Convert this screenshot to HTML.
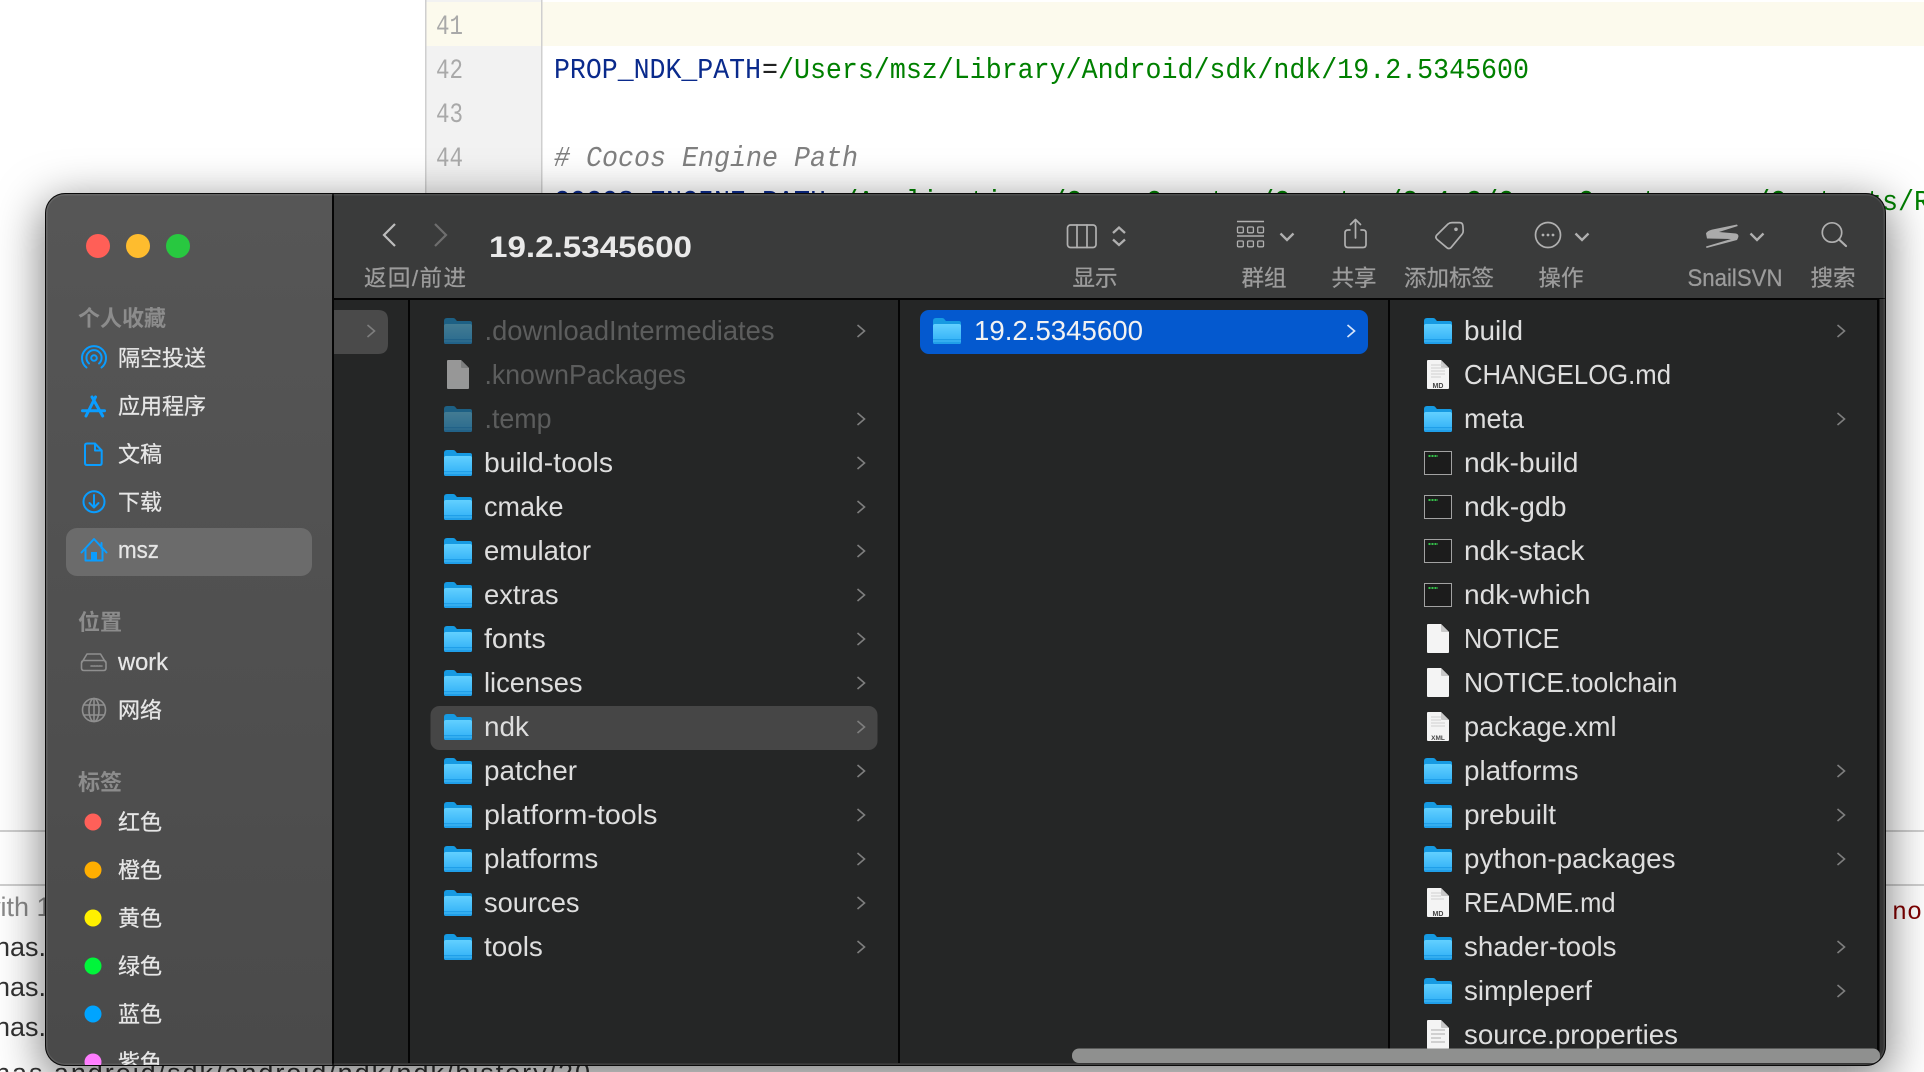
<!DOCTYPE html>
<html lang="zh"><head><meta charset="utf-8"><title>Finder</title>
<style>
html,body{margin:0;padding:0;width:1924px;height:1072px;overflow:hidden;background:#fff}
svg{display:block;position:absolute}
#bg{left:0;top:0}
#win{position:absolute;left:45px;top:193px;width:1841px;height:873px;border-radius:20px;overflow:hidden;box-shadow:0 12px 45px 3px rgba(0,0,0,.5);background:#252626}
#win svg{left:0;top:0}
#edge{position:absolute;left:0;top:0;right:0;bottom:0;border-radius:20px;box-shadow:inset 0 0 0 1px #0a0a0a,inset 0 0 0 2.500px rgba(255,255,255,.09);pointer-events:none}
text{font-family:"Liberation Sans","Noto Sans CJK SC",sans-serif}
.m{font-family:"Liberation Mono",monospace;font-size:29px}
.n{font-family:"Liberation Mono",monospace;font-size:28px;fill:#a9a9a9}
.t{font-size:27.500px;fill:#dedede}
.d{font-size:27.500px;fill:#5c5d5d}
.l{font-size:22.500px;fill:#9c9c9c;text-anchor:middle;stroke:#9c9c9c;stroke-width:.25px}
.s{font-size:22px;fill:#e6e6e6;stroke:#e6e6e6;stroke-width:.25px}
.h{font-size:22px;fill:#8c8c8c;font-weight:700}
.b{font-size:27px;fill:#333}
.ic{fill:none;stroke:#b0b0b0;stroke-width:1.700;stroke-linecap:round;stroke-linejoin:round}
.bl{fill:none;stroke:#0a9dff;stroke-width:2;stroke-linecap:round;stroke-linejoin:round}
.gr{fill:none;stroke:#8f8f8f;stroke-width:1.600;stroke-linecap:round;stroke-linejoin:round}
</style></head><body>
<svg id="bg" width="1924" height="1072" viewBox="0 0 1924 1072">
<rect x="425" y="0" width="117" height="900" fill="#f2f2f2"/>
<rect x="425" y="2" width="1499" height="44" fill="#fcfaed"/>
<rect x="425" y="0" width="1.500" height="900" fill="#cfcfcf"/>
<rect x="541" y="0" width="1.500" height="900" fill="#cfcfcf"/>
<text class="n" x="436" y="34" textLength="27" lengthAdjust="spacingAndGlyphs">41</text>
<text class="n" x="436" y="78" textLength="27" lengthAdjust="spacingAndGlyphs">42</text>
<text class="n" x="436" y="122" textLength="27" lengthAdjust="spacingAndGlyphs">43</text>
<text class="n" x="436" y="166" textLength="27" lengthAdjust="spacingAndGlyphs">44</text>
<text class="m" x="554" y="78" fill="#0a2a8c" textLength="207" lengthAdjust="spacingAndGlyphs">PROP_NDK_PATH</text>
<text class="m" x="762" y="78" fill="#222" textLength="16" lengthAdjust="spacingAndGlyphs">=</text>
<text class="m" x="778" y="78" fill="#008000" textLength="751" lengthAdjust="spacingAndGlyphs">/Users/msz/Library/Android/sdk/ndk/19.2.5345600</text>
<text class="m" x="554" y="166" fill="#808080" font-style="italic" textLength="304" lengthAdjust="spacingAndGlyphs"># Cocos Engine Path</text>
<text class="m" x="554" y="210" fill="#0a2a8c" textLength="272" lengthAdjust="spacingAndGlyphs">COCOS_ENGINE_PATH</text>
<text class="m" x="826" y="210" fill="#222" textLength="16" lengthAdjust="spacingAndGlyphs">=</text>
<text class="m" x="842" y="210" fill="#008000" textLength="1216" lengthAdjust="spacingAndGlyphs">/Applications/CocosCreator/Creator/2.4.3/CocosCreator.app/Contents/Resources</text>
<rect x="0" y="830" width="1924" height="2" fill="#cfcfcf"/>
<rect x="0" y="884" width="1924" height="2" fill="#cfcfcf"/>
<text class="b" x="-19" y="916" style="fill:#8a8a8a">with 1</text>
<text class="b" x="-5" y="956">has.</text>
<text class="b" x="-5" y="996">has.</text>
<text class="b" x="-5" y="1036">has.</text>
<text class="b" x="-5" y="1082" textLength="595">has android/sdk/android/ndk/ndk/history/20</text>
<text class="m" x="1892" y="919" style="fill:#800000;font-size:25px" textLength="30" lengthAdjust="spacingAndGlyphs">no</text>
</svg>

<div id="win">
<svg width="1841" height="873" viewBox="45 193 1841 873">
<defs>
<linearGradient id="gf" x1="0" y1="0" x2="0" y2="1"><stop offset="0" stop-color="#62d0ff"/><stop offset="1" stop-color="#2daef6"/></linearGradient>
<linearGradient id="side" x1="0" y1="0" x2="0" y2="1"><stop offset="0" stop-color="#565656"/><stop offset="1" stop-color="#4a4a4a"/></linearGradient>
<symbol id="f" width="28" height="27" viewBox="0 0 28 27" overflow="visible">
<path d="M0 3Q0 0 3 0H9Q11 0 12 2L13 3H26Q28 3 28 5V24Q28 26 26 26H2Q0 26 0 24Z" fill="#169ae2"/>
<path d="M0 8Q0 6 2 6H26Q28 6 28 8V24Q28 26 26 26H2Q0 26 0 24Z" fill="url(#gf)"/>
<path d="M0 21H28V24Q28 26 26 26H2Q0 26 0 24Z" fill="#209fe9"/>
<rect x="0" y="22.500" width="28" height="1" fill="#48bdf7"/>
</symbol>
<symbol id="p" width="22" height="29" viewBox="0 0 22 29" overflow="visible">
<path d="M1 0H14L22 8V28Q22 29 21 29H1Q0 29 0 28V1Q0 0 1 0Z" fill="#f4f4f4"/>
<path d="M14 0L22 8H15Q14 8 14 7Z" fill="#c8c8c8"/>
</symbol>
<symbol id="x" width="28" height="24" viewBox="0 0 28 24" overflow="visible">
<rect x=".5" y=".5" width="27" height="23" fill="#1c1c1c" stroke="#a2a2a2"/>
<path d="M4.500 5H14" stroke="#35c24a" stroke-width="2" stroke-dasharray="2 1"/>
</symbol>
<symbol id="c" width="10" height="14" viewBox="0 0 10 14"><path d="M1.500 1L8.500 7L1.500 13" fill="none" stroke="#7e7e7e" stroke-width="1.600"/></symbol>
<symbol id="v" width="16" height="10" viewBox="0 0 16 10"><path d="M1.500 1.500L8 8L14.500 1.500" fill="none" stroke="#b0b0b0" stroke-width="2.300"/></symbol>
</defs>

<!-- panes -->
<rect x="45" y="193" width="288" height="873" fill="url(#side)"/>
<rect x="332" y="193" width="1554" height="105" fill="#3a3b3b"/>
<rect x="332" y="299" width="1545" height="767" fill="#252626"/>
<rect x="332" y="298" width="1554" height="2" fill="#050505"/>
<rect x="332" y="193" width="2" height="873" fill="#050505"/>
<rect x="408" y="299" width="2" height="767" fill="#050505"/>
<rect x="898" y="299" width="2" height="767" fill="#050505"/>
<rect x="1388" y="299" width="2" height="767" fill="#050505"/>
<rect x="1877" y="299" width="2.500" height="767" fill="#050505"/>
<rect x="1879.500" y="299" width="6.500" height="767" fill="#333"/>
<rect x="334" y="1063" width="1552" height="3" fill="#2c2c2c"/>

<!-- traffic lights -->
<circle cx="98" cy="246" r="12" fill="#ff5f57"/>
<circle cx="138" cy="246" r="12" fill="#febc2e"/>
<circle cx="178" cy="246" r="12" fill="#28c840"/>

<!-- sidebar -->
<text class="h" x="78" y="326" textLength="88">个人收藏</text>
<rect x="66" y="528" width="246" height="48" rx="11" fill="#6b6b6b"/>
<g class="bl">
<path d="M86.500 367.500A12 12 0 1 1 101.500 367.500"/><path d="M89 363.500A7.600 7.600 0 1 1 99 363.500"/><circle cx="94" cy="358" r="2.800"/>
<path d="M92 397L102.700 416M95.500 397L86 416M82.500 410.700H104.500" stroke-width="3"/>
<path d="M87 443.500H95L101.700 450.500V463Q101.700 465 99.700 465H87Q85 465 85 463V445.500Q85 443.500 87 443.500ZM95 444V450.500H101.500"/>
<circle cx="94" cy="501.700" r="10.500"/><path d="M94 495V507.500M89.500 503L94 507.500L98.500 503"/>
<path d="M81.500 552.500L94 539L106.500 552.500M85.500 549V560.500H102.500V549M101.500 543V548"/>
</g>
<rect x="91" y="552" width="6" height="9" fill="#0a9dff"/>
<g class="gr">
<path d="M81.500 663L87 654H100.500L106 663M81.500 663Q81.500 660.500 84 660.500H103.500Q106 660.500 106 663V668Q106 670.500 103.500 670.500H84Q81.500 670.500 81.500 668Z"/>
<path d="M91 666H102" stroke-dasharray="1.500 1.200"/>
<circle cx="94" cy="710" r="11.500"/><ellipse cx="94" cy="710" rx="5" ry="11.500"/><path d="M83.500 705H104.500M83.500 715H104.500M94 698.500V721.500"/>
</g>
<text class="s" x="118" y="366">隔空投送</text>
<text class="s" x="118" y="414">应用程序</text>
<text class="s" x="118" y="462">文稿</text>
<text class="s" x="118" y="510">下载</text>
<text class="s" x="118" y="558" style="font-size:24px" textLength="41" lengthAdjust="spacingAndGlyphs">msz</text>
<text class="h" x="78" y="630" textLength="44">位置</text>
<text class="s" x="118" y="670" style="font-size:24px" textLength="50" lengthAdjust="spacingAndGlyphs">work</text>
<text class="s" x="118" y="718">网络</text>
<text class="h" x="78" y="790" textLength="44">标签</text>
<circle cx="93" cy="822" r="8.500" fill="#ff6059"/><text class="s" x="118" y="830">红色</text>
<circle cx="93" cy="870" r="8.500" fill="#ffae00"/><text class="s" x="118" y="878">橙色</text>
<circle cx="93" cy="918" r="8.500" fill="#fff000"/><text class="s" x="118" y="926">黄色</text>
<circle cx="93" cy="966" r="8.500" fill="#00f53a"/><text class="s" x="118" y="974">绿色</text>
<circle cx="93" cy="1014" r="8.500" fill="#00a4ff"/><text class="s" x="118" y="1022">蓝色</text>
<circle cx="93" cy="1062" r="8.500" fill="#ff7cff"/><text class="s" x="118" y="1070">紫色</text>

<!-- toolbar left -->
<path d="M395 224L384 235L395 246" fill="none" stroke="#bdbdbd" stroke-width="2.200"/>
<path d="M435 224L446 235L435 246" fill="none" stroke="#6e6e6e" stroke-width="2.200"/>
<text x="489" y="257" font-size="30" font-weight="700" fill="#e9e9e9" textLength="203" lengthAdjust="spacingAndGlyphs">19.2.5345600</text>
<text class="l" x="415" y="286" textLength="102" lengthAdjust="spacing">返回/前进</text>

<!-- toolbar icons -->
<g class="ic">
<rect x="1067.500" y="225" width="28.500" height="22.500" rx="3"/><path d="M1077 225V247.500M1087 225V247.500"/>
</g>
<path d="M1113 233L1119 227.500L1125 233M1113 239.500L1119 245L1125 239.500" fill="none" stroke="#b0b0b0" stroke-width="2.300"/>
<g class="ic">
<path d="M1237 221.500H1264M1237 236H1264" stroke-linecap="butt" style="stroke-width:1.500"/>
<rect x="1237.500" y="227" width="5.800" height="5.800" rx="1" style="stroke-width:1.300"/><rect x="1247.600" y="227" width="5.800" height="5.800" rx="1" style="stroke-width:1.300"/><rect x="1257.700" y="227" width="5.800" height="5.800" rx="1" style="stroke-width:1.300"/>
<rect x="1237.500" y="241" width="5.800" height="5.800" rx="1" style="stroke-width:1.300"/><rect x="1247.600" y="241" width="5.800" height="5.800" rx="1" style="stroke-width:1.300"/><rect x="1257.700" y="241" width="5.800" height="5.800" rx="1" style="stroke-width:1.300"/>
</g>
<use href="#v" x="1279" y="232"/>
<g class="ic">
<path d="M1350 230H1348Q1345 230 1345 233V244.500Q1345 247.500 1348 247.500H1363Q1366 247.500 1366 244.500V233Q1366 230 1363 230H1361"/>
<path d="M1355.500 238V220M1350.500 224.500L1355.500 219.500L1360.500 224.500"/>
<path d="M1452 222.600L1459.500 222.600Q1462.700 222.600 1462.900 226L1463.200 231Q1463.200 233 1462 234.300L1451 247.600Q1449 249.400 1447 247.800L1437 239.400Q1435 237.400 1436.500 235.400L1448 224Q1449.800 222.600 1452 222.600Z"/>
<circle cx="1548" cy="235" r="12.500"/>
<circle cx="1832" cy="232.500" r="9.700"/><path d="M1839 239.500L1846 246" style="stroke-width:2.200"/>
</g>
<circle cx="1456" cy="229.300" r="1.800" fill="#b0b0b0"/>
<circle cx="1543" cy="235" r="1.400" fill="#b0b0b0"/><circle cx="1548" cy="235" r="1.400" fill="#b0b0b0"/><circle cx="1553" cy="235" r="1.400" fill="#b0b0b0"/>
<use href="#v" x="1574" y="232"/>
<path d="M1737 224.500L1737.800 226L1719 232L1736 233.500Q1739.500 234.500 1738 238L1737 240L1706.500 248L1706 246.500L1731 239L1707 238.500L1706 233.500Q1707 231 1712 229.600Z" fill="#ababab"/>
<use href="#v" x="1749" y="232"/>
<text class="l" x="1095" y="286">显示</text>
<text class="l" x="1264" y="286">群组</text>
<text class="l" x="1354" y="286">共享</text>
<text class="l" x="1449" y="286">添加标签</text>
<text class="l" x="1561" y="286">操作</text>
<text class="l" x="1735" y="286" style="font-size:24px" textLength="95" lengthAdjust="spacingAndGlyphs">SnailSVN</text>
<text class="l" x="1833" y="286">搜索</text>

<!-- column 1 -->
<path d="M334 310H378Q388 310 388 320V344Q388 354 378 354H334Z" fill="#4a4a4a"/>
<use href="#c" x="366" y="324"/>

<!-- column 2 -->
<rect x="430.500" y="706" width="447" height="44" rx="9" fill="#464646"/>
<g opacity=".5"><use href="#f" x="444" y="318"/><use href="#f" x="444" y="406"/></g>
<use href="#p" x="447" y="360" style="opacity:.55"/>
<use href="#f" x="444" y="450"/><use href="#f" x="444" y="494"/><use href="#f" x="444" y="538"/><use href="#f" x="444" y="582"/><use href="#f" x="444" y="626"/><use href="#f" x="444" y="670"/><use href="#f" x="444" y="714"/><use href="#f" x="444" y="758"/><use href="#f" x="444" y="802"/><use href="#f" x="444" y="846"/><use href="#f" x="444" y="890"/><use href="#f" x="444" y="934"/>
<g>
<text class="d" x="484.500" y="340" textLength="290" lengthAdjust="spacingAndGlyphs">.downloadIntermediates</text>
<text class="d" x="484.500" y="384" textLength="201.500" lengthAdjust="spacingAndGlyphs">.knownPackages</text>
<text class="d" x="484.500" y="428" textLength="67" lengthAdjust="spacingAndGlyphs">.temp</text>
<text class="t" x="484" y="472" textLength="129" lengthAdjust="spacingAndGlyphs">build-tools</text>
<text class="t" x="484" y="516" textLength="79.500" lengthAdjust="spacingAndGlyphs">cmake</text>
<text class="t" x="484" y="560" textLength="107" lengthAdjust="spacingAndGlyphs">emulator</text>
<text class="t" x="484" y="604" textLength="74.600" lengthAdjust="spacingAndGlyphs">extras</text>
<text class="t" x="484" y="648" textLength="61.700" lengthAdjust="spacingAndGlyphs">fonts</text>
<text class="t" x="484" y="692" textLength="98.500" lengthAdjust="spacingAndGlyphs">licenses</text>
<text class="t" x="484" y="736" textLength="45" lengthAdjust="spacingAndGlyphs">ndk</text>
<text class="t" x="484" y="780" textLength="93" lengthAdjust="spacingAndGlyphs">patcher</text>
<text class="t" x="484" y="824" textLength="173.400" lengthAdjust="spacingAndGlyphs">platform-tools</text>
<text class="t" x="484" y="868" textLength="114.300" lengthAdjust="spacingAndGlyphs">platforms</text>
<text class="t" x="484" y="912" textLength="95.500" lengthAdjust="spacingAndGlyphs">sources</text>
<text class="t" x="484" y="956" textLength="58.800" lengthAdjust="spacingAndGlyphs">tools</text>
</g>
<use href="#c" x="856" y="324"/><use href="#c" x="856" y="412"/><use href="#c" x="856" y="456"/><use href="#c" x="856" y="500"/><use href="#c" x="856" y="544"/><use href="#c" x="856" y="588"/><use href="#c" x="856" y="632"/><use href="#c" x="856" y="676"/><use href="#c" x="856" y="720"/><use href="#c" x="856" y="764"/><use href="#c" x="856" y="808"/><use href="#c" x="856" y="852"/><use href="#c" x="856" y="896"/><use href="#c" x="856" y="940"/>

<!-- column 3 -->
<rect x="920" y="310" width="448" height="44" rx="9" fill="#0459cf"/>
<use href="#f" x="933" y="318"/>
<text x="974" y="340" font-size="27.500" fill="#f2f2f2" textLength="169" lengthAdjust="spacingAndGlyphs">19.2.5345600</text>
<path d="M1347.500 325L1354.500 331L1347.500 337" fill="none" stroke="#d6e4fa" stroke-width="1.700"/>

<!-- column 4 -->
<use href="#f" x="1424" y="318"/><use href="#f" x="1424" y="406"/><use href="#f" x="1424" y="758"/><use href="#f" x="1424" y="802"/><use href="#f" x="1424" y="846"/><use href="#f" x="1424" y="934"/><use href="#f" x="1424" y="978"/>
<use href="#x" x="1424" y="451"/><use href="#x" x="1424" y="495"/><use href="#x" x="1424" y="539"/><use href="#x" x="1424" y="583"/>
<use href="#p" x="1427" y="360"/><use href="#p" x="1427" y="624"/><use href="#p" x="1427" y="668"/><use href="#p" x="1427" y="712"/><use href="#p" x="1427" y="888"/><use href="#p" x="1427" y="1020"/>
<path d="M1431 365H1443M1431 368H1445M1431 371H1445M1431 374H1445M1431 377H1441" stroke="#d6d6d6" stroke-width="1.200"/>
<text x="1438" y="388" font-size="7" text-anchor="middle" fill="#444" font-weight="700">MD</text>
<path d="M1431 893H1441M1431 896H1441M1431 899H1444" stroke="#d6d6d6" stroke-width="1.200"/>
<text x="1438" y="916" font-size="7" text-anchor="middle" fill="#444" font-weight="700">MD</text>
<path d="M1431 717H1441M1431 720H1441M1431 723H1445M1431 726H1445" stroke="#d6d6d6" stroke-width="1.200"/>
<text x="1438" y="740" font-size="6.500" text-anchor="middle" fill="#444" font-weight="700">XML</text>
<path d="M1431 1030H1445M1431 1034H1445M1431 1038H1441M1431 1042H1445" stroke="#c4c4c4" stroke-width="1.500"/>
<g>
<text class="t" x="1464" y="340" textLength="59" lengthAdjust="spacingAndGlyphs">build</text>
<text class="t" x="1464" y="384" textLength="207" lengthAdjust="spacingAndGlyphs">CHANGELOG.md</text>
<text class="t" x="1464" y="428" textLength="60" lengthAdjust="spacingAndGlyphs">meta</text>
<text class="t" x="1464" y="472" textLength="114.500" lengthAdjust="spacingAndGlyphs">ndk-build</text>
<text class="t" x="1464" y="516" textLength="102.500" lengthAdjust="spacingAndGlyphs">ndk-gdb</text>
<text class="t" x="1464" y="560" textLength="120.500" lengthAdjust="spacingAndGlyphs">ndk-stack</text>
<text class="t" x="1464" y="604" textLength="126.500" lengthAdjust="spacingAndGlyphs">ndk-which</text>
<text class="t" x="1464" y="648" textLength="95.500" lengthAdjust="spacingAndGlyphs">NOTICE</text>
<text class="t" x="1464" y="692" textLength="213.500" lengthAdjust="spacingAndGlyphs">NOTICE.toolchain</text>
<text class="t" x="1464" y="736" textLength="152.500" lengthAdjust="spacingAndGlyphs">package.xml</text>
<text class="t" x="1464" y="780" textLength="114.500" lengthAdjust="spacingAndGlyphs">platforms</text>
<text class="t" x="1464" y="824" textLength="92" lengthAdjust="spacingAndGlyphs">prebuilt</text>
<text class="t" x="1464" y="868" textLength="211.500" lengthAdjust="spacingAndGlyphs">python-packages</text>
<text class="t" x="1464" y="912" textLength="151.500" lengthAdjust="spacingAndGlyphs">README.md</text>
<text class="t" x="1464" y="956" textLength="152.500" lengthAdjust="spacingAndGlyphs">shader-tools</text>
<text class="t" x="1464" y="1000" textLength="128" lengthAdjust="spacingAndGlyphs">simpleperf</text>
<text class="t" x="1464" y="1044" textLength="214" lengthAdjust="spacingAndGlyphs">source.properties</text>
</g>
<use href="#c" x="1836" y="324"/><use href="#c" x="1836" y="412"/><use href="#c" x="1836" y="764"/><use href="#c" x="1836" y="808"/><use href="#c" x="1836" y="852"/><use href="#c" x="1836" y="940"/><use href="#c" x="1836" y="984"/>

<!-- scrollbar -->
<rect x="1072" y="1048.500" width="808" height="14.500" rx="7" fill="#8f908f"/>
</svg>
<div id="edge"></div>
</div>
</body></html>
